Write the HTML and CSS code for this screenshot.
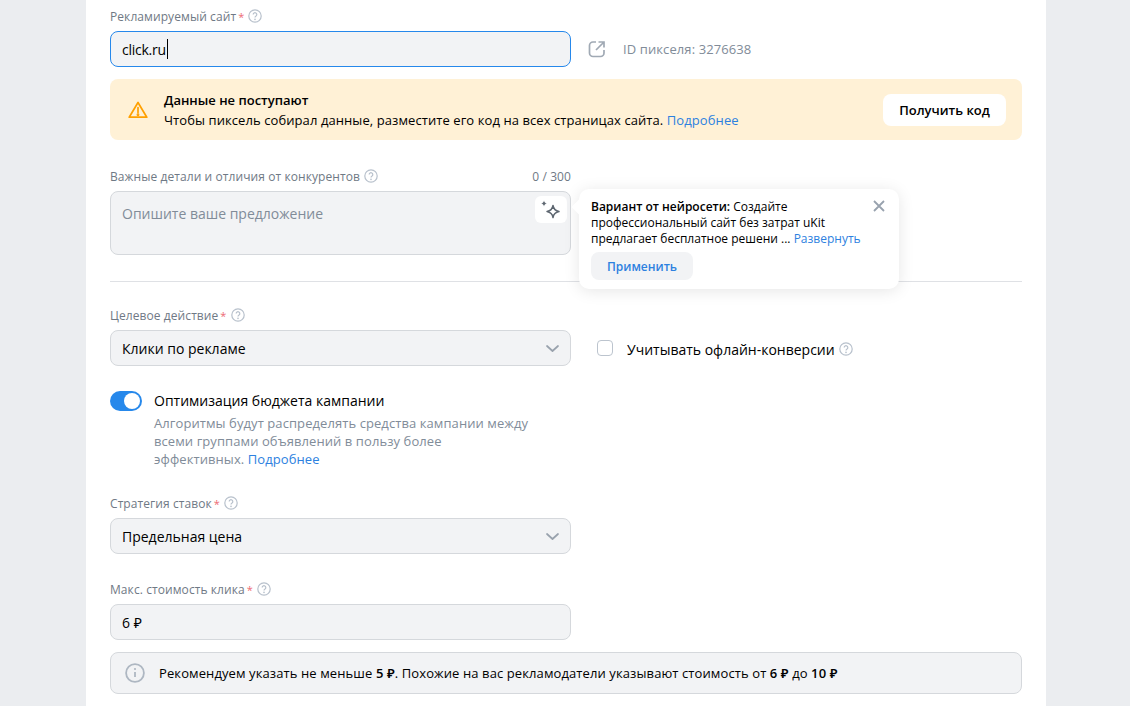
FILE: index.html
```html
<!DOCTYPE html>
<html lang="ru">
<head>
<meta charset="utf-8">
<title>Кампания</title>
<link rel="stylesheet" href="styles.css">
</head>
<body>
<main class="card">
  <div class="label-row"><span>Рекламируемый сайт</span><span class="req">*</span><svg class="help" viewBox="0 0 14 14"><circle cx="7" cy="7" r="6.2"/><path d="M5.2 5.5a1.8 1.8 0 1 1 2.8 1.5c-.7.4-1 .8-1 1.5"/><circle class="dot" cx="7" cy="10.4" r=".8"/></svg></div>
  <div class="split">
    <div class="field focus"><span class="site">click.ru</span><i class="caret"></i></div>
    <div class="pixel">
      <svg class="ext" viewBox="0 0 18 18"><path d="M8 2H5a3.5 3.5 0 0 0-3.500 3.500v7.500A3.500 3.500 0 0 0 5 16.500h7.500a3.500 3.500 0 0 0 3.500-3.500v-3"/><path d="M8 10 15.500 2.500M10.500 2H16V7.500"/></svg>
      <span>ID пикселя: 3276638</span>
    </div>
  </div>
  <div class="alert">
    <svg class="warn" viewBox="0 0 20 18"><path d="M10 1.500 1.200 16.200h17.600z"/><path d="M10 6.500v5"/><circle cx="10" cy="13.700" r=".6"/></svg>
    <div class="alert-text">
      <strong>Данные не поступают</strong>
      <p>Чтобы пиксель собирал данные, разместите его код на всех страницах сайта. <a>Подробнее</a></p>
    </div>
    <button class="code-btn">Получить код</button>
  </div>
  <div class="details">
    <div class="label-row counter-row"><span>Важные детали и отличия от конкурентов</span><svg class="help" viewBox="0 0 14 14"><circle cx="7" cy="7" r="6.2"/><path d="M5.2 5.5a1.8 1.8 0 1 1 2.8 1.5c-.7.4-1 .8-1 1.5"/><circle class="dot" cx="7" cy="10.4" r=".8"/></svg><span class="count">0 / 300</span></div>
    <div class="textarea">
      <span>Опишите ваше предложение</span>
      <div class="ai-btn"><svg viewBox="1 0 24 24"><path d="M15 7.500c.6 3.500 2.500 5.400 6 6-3.500.6-5.400 2.500-6 6-.6-3.500-2.500-5.400-6-6 3.500-.6 5.400-2.500 6-6z"/><path class="fill" d="M6 2.500c.3 1.800 1.200 2.700 3 3-1.800.3-2.700 1.200-3 3-.3-1.800-1.200-2.700-3-3 1.800-.3 2.700-1.200 3-3z"/></svg></div>
    </div>
    <aside class="pop">
      <svg class="close" viewBox="0 0 12 12"><path d="M1 1l10 10M11 1 1 11"/></svg>
      <p><strong>Вариант от нейросети:</strong> Создайте<br>профессиональный сайт без затрат uKit<br>предлагает бесплатное решени ... <a>Развернуть</a></p>
      <button class="apply">Применить</button>
    </aside>
  </div>
  <hr class="rule">
  <div class="label-row action-label"><span>Целевое действие</span><span class="req">*</span><svg class="help" viewBox="0 0 14 14"><circle cx="7" cy="7" r="6.2"/><path d="M5.2 5.5a1.8 1.8 0 1 1 2.8 1.500c-.7.4-1 .8-1 1.500"/><circle class="dot" cx="7" cy="10.400" r=".8"/></svg></div>
  <div class="split">
    <div class="field select"><span>Клики по рекламе</span><svg class="chev" viewBox="0 0 13 7"><path d="M1 1l5.500 5L12 1"/></svg></div>
    <label class="offline"><i class="check"></i><span>Учитывать офлайн-конверсии</span><svg class="help" viewBox="0 0 14 14"><circle cx="7" cy="7" r="6.2"/><path d="M5.2 5.5a1.8 1.8 0 1 1 2.8 1.500c-.7.4-1 .8-1 1.500"/><circle class="dot" cx="7" cy="10.400" r=".8"/></svg></label>
  </div>
  <div class="budget">
    <div class="toggle"><i></i></div>
    <div class="budget-text">
      <div class="budget-title">Оптимизация бюджета кампании</div>
      <p>Алгоритмы будут распределять средства кампании между всеми группами объявлений в пользу более эффективных. <a>Подробнее</a></p>
    </div>
  </div>
  <div class="label-row strategy-label"><span>Стратегия ставок</span><span class="req">*</span><svg class="help" viewBox="0 0 14 14"><circle cx="7" cy="7" r="6.2"/><path d="M5.2 5.5a1.8 1.8 0 1 1 2.8 1.500c-.7.4-1 .8-1 1.500"/><circle class="dot" cx="7" cy="10.400" r=".8"/></svg></div>
  <div class="field select narrow"><span>Предельная цена</span><svg class="chev" viewBox="0 0 13 7"><path d="M1 1l5.500 5L12 1"/></svg></div>
  <div class="label-row price-label"><span>Макс. стоимость клика</span><span class="req">*</span><svg class="help" viewBox="0 0 14 14"><circle cx="7" cy="7" r="6.2"/><path d="M5.2 5.5a1.8 1.8 0 1 1 2.8 1.500c-.7.4-1 .8-1 1.500"/><circle class="dot" cx="7" cy="10.400" r=".8"/></svg></div>
  <div class="field narrow"><span>6 ₽</span></div>
  <div class="info">
    <svg class="info-ico" viewBox="0 0 20 20"><circle cx="10" cy="10" r="8.900"/><path d="M10 9v5"/><circle class="dot" cx="10" cy="6" r="1.100"/></svg>
    <span>Рекомендуем указать не меньше <b>5 ₽</b>. Похожие на вас рекламодатели указывают стоимость от <b>6 ₽</b> до <b>10 ₽</b></span>
  </div>
</main>
</body>
</html>
```
FILE: styles.css
```css
* { box-sizing: border-box; }
html, body { margin: 0; height: 706px; overflow: hidden; }
body { background: #ebedf0; font-family: "Open Sans", "Noto Sans", sans-serif; color: #000; }
a { color: #2d81e0; }
p { margin: 0; }
.card { width: 960px; height: 706px; margin-left: 86px; padding: 8px 24px 0; background: #fff; position: relative; }
.label-row { display: flex; align-items: center; height: 16px; padding-top: 2px; font-size: 12px; line-height: 14px; letter-spacing: .08px; color: #6f7985; }
.req { color: #ed6a73; margin-left: 2px; font-size: 11px; }
.help { width: 14px; height: 14px; margin-left: 4px; flex: none; fill: none; stroke: #b8c1cc; stroke-width: 1.200; }
.label-row .help { margin-top: -2px; }
.help .dot { fill: #b8c1cc; stroke: none; }
.split { display: flex; align-items: center; margin-top: 7px; }
.field { width: 461px; height: 36px; flex: none; display: flex; align-items: center; padding: 0 11px; background: #f2f3f5; border: 1px solid #d5d8dc; border-radius: 8px; font-size: 14px; }
.field.focus { border-color: #2688eb; }
.site { letter-spacing: -.25px; }
.caret { width: 1px; height: 20px; background: #000; margin-left: 1px; }
.pixel { display: flex; align-items: center; margin-left: 17px; font-size: 13px; letter-spacing: .1px; color: #818c99; }
.ext { width: 18px; height: 18px; margin-right: 17px; fill: none; stroke: #a0a9b4; stroke-width: 1.700; }
.alert { display: flex; align-items: center; height: 61px; margin-top: 12px; padding: 0 16px 0 18px; background: #fff1d6; border-radius: 8px; font-size: 13px; line-height: 19px; }
.warn { width: 20px; height: 18px; margin-right: 16px; flex: none; fill: none; stroke: #ffa000; stroke-width: 1.700; stroke-linejoin: round; stroke-linecap: round; }
.alert-text { flex: 1; padding-top: 2px; }
.alert-text strong { display: block; margin-bottom: 1px; font-weight: 600; }
.alert-text p { letter-spacing: .08px; }
.code-btn { height: 32px; width: 123px; border: 0; border-radius: 8px; background: #fff; font: 600 13px "Open Sans", sans-serif; color: #000; }
.details { position: relative; margin-top: 28px; width: 461px; }
.counter-row .count { margin-left: auto; }
.textarea { position: relative; height: 64px; margin-top: 7px; padding: 12px 11px; background: #f2f3f5; border: 1px solid #d5d8dc; border-radius: 8px; font-size: 14px; line-height: 20px; color: #818c99; }
.ai-btn { position: absolute; top: 4px; right: 3px; width: 32px; height: 27px; display: flex; align-items: center; justify-content: center; background: #fff; border-radius: 6px; }
.ai-btn svg { width: 24px; height: 24px; fill: none; stroke: #5d6670; stroke-width: 1.500; stroke-linejoin: round; }
.ai-btn .fill { fill: #5d6670; stroke: none; }
.pop { position: absolute; left: 469px; top: 21px; width: 320px; height: 100px; padding: 10px 12px; background: #fff; border-radius: 10px; box-shadow: 0 2px 16px rgba(0, 0, 0, .1); font-size: 12px; line-height: 16px; z-index: 2; }
.pop::before { content: ""; position: absolute; left: -5px; top: 12px; width: 12px; height: 12px; background: #fff; transform: rotate(45deg); }
.pop p { position: relative; }
.pop strong { font-weight: 600; }
.close { position: absolute; top: 11px; right: 14px; width: 12px; height: 12px; fill: none; stroke: #98a2ae; stroke-width: 1.800; }
.apply { display: block; width: 102px; height: 28px; margin-top: 5px; border: 0; border-radius: 8px; background: #f2f3f5; color: #2d81e0; font: 600 12px "Open Sans", sans-serif; }
.rule { height: 1px; margin: 26px 0 0; border: 0; background: #dfe1e5; }
.action-label { margin-top: 25px; }
.offline { display: flex; align-items: center; margin-left: 26px; padding-top: 2px; font-size: 14px; }
.check { width: 16px; height: 16px; margin-right: 14px; margin-top: -2px; background: #fff; border: 1.500px solid #bcc4ce; border-radius: 4px; }
.budget { display: flex; margin-top: 25px; }
.toggle { width: 32px; height: 20px; border-radius: 10px; background: #2688eb; display: flex; justify-content: flex-end; padding: 2px; flex: none; }
.toggle i { width: 16px; height: 16px; border-radius: 50%; background: #fff; }
.budget-text { margin-left: 12px; width: 380px; }
.budget-title { font-size: 14px; line-height: 20px; }
.budget-text p { margin-top: 3px; font-size: 13px; line-height: 18px; letter-spacing: .08px; color: #818c99; }
.strategy-label { margin-top: 27px; }
.narrow { margin-top: 7px; }
.select { justify-content: space-between; }
.chev { width: 13px; height: 7px; fill: none; stroke: #99a2ad; stroke-width: 1.700; stroke-linecap: round; stroke-linejoin: round; }
.price-label { margin-top: 27px; }
.info { display: flex; align-items: center; height: 42px; margin-top: 12px; padding: 0 14px; background: #f2f3f5; border: 1px solid #d5d8dc; border-radius: 8px; font-size: 13px; letter-spacing: .1px; }
.info-ico { width: 20px; height: 20px; margin-right: 14px; flex: none; fill: none; stroke: #aeb7c2; stroke-width: 1.800; }
.info-ico .dot { fill: #aeb7c2; stroke: none; }
.info b { font-weight: 600; }
```
